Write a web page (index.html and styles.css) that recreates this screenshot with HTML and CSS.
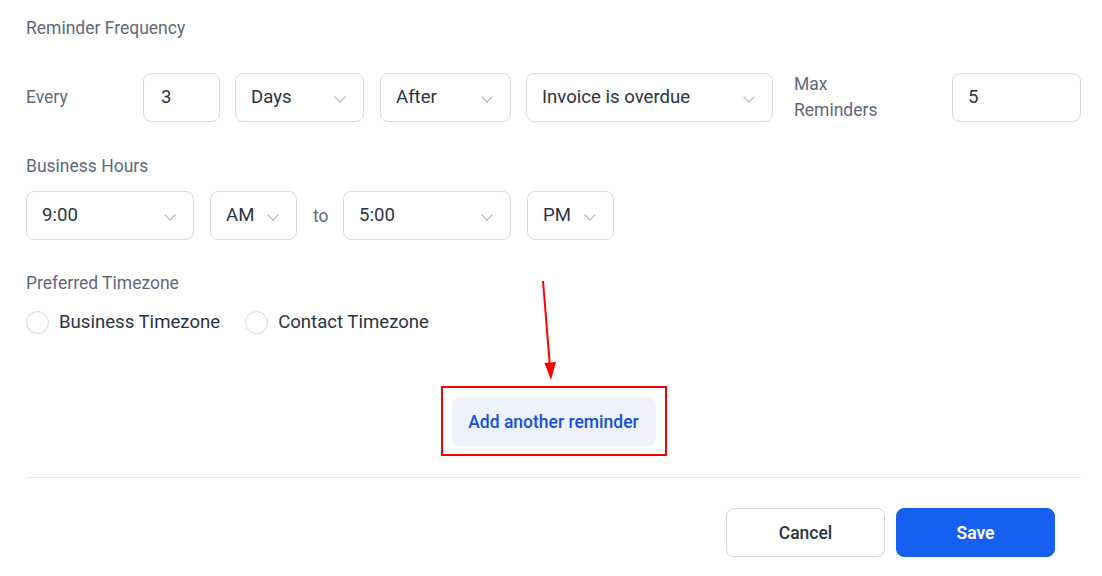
FILE: index.html
```html
<!DOCTYPE html>
<html lang="en">
<head>
    <meta charset="UTF-8">
    <title>Reminder settings</title>
    <link rel="stylesheet" href="styles.css">
</head>
<body>
    <div id="page">
        <div class="label first">Reminder Frequency</div>
        <div class="row freq">
            <span class="every">Every</span>
            <div class="field w-num">3</div>
            <div class="field select w-days">Days<i class="chev"></i></div>
            <div class="field select w-after">After<i class="chev"></i></div>
            <div class="field select w-event">Invoice is overdue<i class="chev"></i></div>
            <span class="max">Max<br>Reminders</span>
            <div class="field w-max">5</div>
        </div>

        <div class="label hours">Business Hours</div>
        <div class="row time">
            <div class="field select w-time">9:00<i class="chev"></i></div>
            <div class="field select w-ampm">AM<i class="chev"></i></div>
            <span class="to">to</span>
            <div class="field select w-time">5:00<i class="chev"></i></div>
            <div class="field select w-ampm">PM<i class="chev"></i></div>
        </div>

        <div class="label tz">Preferred Timezone</div>
        <div class="radios">
            <label class="radio"><span class="dot"></span>Business Timezone</label>
            <label class="radio"><span class="dot"></span>Contact Timezone</label>
        </div>

        <div class="add-wrap">
            <div class="highlight">
                <button class="add">Add another reminder</button>
            </div>
        </div>

        <div class="divider"></div>

        <div class="footer">
            <button class="btn cancel">Cancel</button>
            <button class="btn save">Save</button>
        </div>

        <!-- annotation arrow -->
        <svg class="arrow" width="30" height="110" viewBox="0 0 30 110">
            <line x1="10" y1="0" x2="17" y2="86" stroke="#f00" stroke-width="2"/>
            <polygon points="11.5,82 23,81 18,99" fill="#f00"/>
        </svg>
    </div>
</body>
</html>
```

FILE: styles.css
```css
*{
    margin: 0;
    padding: 0;
    box-sizing: border-box;
}
body{
    background: #fff;
    font-family: Roboto, "Liberation Sans", sans-serif;
    color: #2b3442;
}
#page{
    position: relative;
    width: 1102px;
    height: 576px;
    padding: 16px 21px 0 26px;
}
.label{
    font-size: 17.5px;
    line-height: 24px;
    color: #5d6a7b;
}
.hours{
    margin-top: 31px;
}
.tz{
    margin-top: 31px;
}
.row{
    display: flex;
    align-items: center;
}
.freq{
    margin-top: 31px;
    gap: 15px;
}
.time{
    margin-top: 13px;
    gap: 16px;
}
.every{
    width: 102px;
    font-size: 17.5px;
    color: #5d6a7b;
}
.max{
    flex: 1;
    margin-left: 6px;
    font-size: 17.5px;
    line-height: 26px;
    color: #5d6a7b;
}
.to{
    width: 15px;
    margin-right: -1px;
    font-size: 17.5px;
    color: #5d6a7b;
}
.field{
    position: relative;
    height: 49px;
    border: 1px solid #d7dae2;
    border-radius: 8px;
    padding: 0 15px;
    font-size: 18.6px;
    line-height: 47px;
    color: #2b3442;
    background: #fff;
}
.select{
    padding-right: 36px;
}
.chev{
    position: absolute;
    right: 19px;
    top: 19px;
    width: 8px;
    height: 8px;
    border-right: 1px solid #a8afba;
    border-bottom: 1px solid #a8afba;
    transform: rotate(45deg);
}
.w-num{ width: 77px; padding-left: 17px; }
.w-days{ width: 129px; }
.w-after{ width: 131px; margin-left: 1px; }
.w-event{ width: 247px; }
.w-max{ width: 129px; }
.w-time{ width: 168px; }
.w-ampm{ width: 87px; }
.radios{
    display: flex;
    gap: 25px;
    margin-top: 15px;
    height: 24px;
}
.radio{
    display: flex;
    align-items: center;
    gap: 10px;
    font-size: 18.6px;
    color: #2b3442;
}
.dot{
    width: 23px;
    height: 23px;
    border: 1px solid #d5d8df;
    border-radius: 50%;
}
.add-wrap{
    display: flex;
    justify-content: center;
    margin-top: 52px;
}
.highlight{
    border: 2px solid #f00;
    padding: 9px 9px 8px;
}
.add{
    width: 204px;
    height: 49px;
    border: none;
    border-radius: 8px;
    background: #eef2fd;
    color: #1551db;
    font-family: Roboto, "Liberation Sans", sans-serif;
    font-size: 17.5px;
    font-weight: 500;
}
.divider{
    margin-top: 21px;
    height: 1px;
    background: #e6e8ec;
}
.footer{
    display: flex;
    justify-content: flex-end;
    gap: 11px;
    margin-top: 30px;
    padding-right: 26px;
}
.btn{
    width: 159px;
    height: 49px;
    border-radius: 8px;
    font-family: Roboto, "Liberation Sans", sans-serif;
    font-size: 17.5px;
    font-weight: 500;
}
.cancel{
    background: #fff;
    border: 1px solid #d3d6de;
    color: #2b3442;
}
.save{
    background: #175ff0;
    border: 1px solid #175ff0;
    color: #fff;
    font-weight: 600;
}
.arrow{
    position: absolute;
    left: 533px;
    top: 281px;
}
```
